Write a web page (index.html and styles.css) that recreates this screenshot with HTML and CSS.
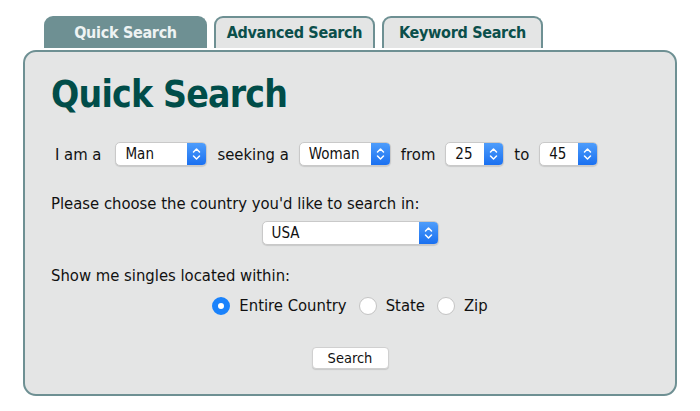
FILE: index.html
```html
<!DOCTYPE html>
<html lang="en">

<head>
    <meta charset="UTF-8">
    <title>Quick Search</title>
    <link rel="stylesheet" href="styles.css">
</head>

<body>
    <div class="search-box">
        <div class="tabs">
            <div class="tab active">Quick Search</div>
            <div class="tab">Advanced Search</div>
            <div class="tab">Keyword Search</div>
        </div>

        <div class="panel">
            <h1>Quick Search</h1>

            <div class="row seek-row">
                <span class="lead">I am a</span>
                <span class="select w-man">
                    <select><option>Man</option></select>
                    <span class="arrow"><svg width="9" height="14" viewBox="0 0 9 14"><path d="M1.5 5 L4.5 2 L7.5 5 M1.5 9 L4.5 12 L7.5 9" fill="none" stroke="#fff" stroke-width="1.5" stroke-linecap="round" stroke-linejoin="round"/></svg></span>
                </span>
                <span>seeking a</span>
                <span class="select w-man">
                    <select><option>Woman</option></select>
                    <span class="arrow"><svg width="9" height="14" viewBox="0 0 9 14"><path d="M1.5 5 L4.5 2 L7.5 5 M1.5 9 L4.5 12 L7.5 9" fill="none" stroke="#fff" stroke-width="1.5" stroke-linecap="round" stroke-linejoin="round"/></svg></span>
                </span>
                <span>from</span>
                <span class="select w-age">
                    <select><option>25</option></select>
                    <span class="arrow"><svg width="9" height="14" viewBox="0 0 9 14"><path d="M1.5 5 L4.5 2 L7.5 5 M1.5 9 L4.5 12 L7.5 9" fill="none" stroke="#fff" stroke-width="1.5" stroke-linecap="round" stroke-linejoin="round"/></svg></span>
                </span>
                <span>to</span>
                <span class="select w-age">
                    <select><option>45</option></select>
                    <span class="arrow"><svg width="9" height="14" viewBox="0 0 9 14"><path d="M1.5 5 L4.5 2 L7.5 5 M1.5 9 L4.5 12 L7.5 9" fill="none" stroke="#fff" stroke-width="1.5" stroke-linecap="round" stroke-linejoin="round"/></svg></span>
                </span>
            </div>

            <p class="label country-label">Please choose the country you'd like to search in:</p>
            <div class="center">
                <span class="select w-country">
                    <select><option>USA</option></select>
                    <span class="arrow"><svg width="9" height="14" viewBox="0 0 9 14"><path d="M1.5 5 L4.5 2 L7.5 5 M1.5 9 L4.5 12 L7.5 9" fill="none" stroke="#fff" stroke-width="1.5" stroke-linecap="round" stroke-linejoin="round"/></svg></span>
                </span>
            </div>

            <p class="label within-label">Show me singles located within:</p>
            <div class="center radios">
                <label><input type="radio" name="area" checked> Entire Country</label>
                <label><input type="radio" name="area"> State</label>
                <label><input type="radio" name="area"> Zip</label>
            </div>

            <div class="center">
                <button>Search</button>
            </div>
        </div>
    </div>
</body>

</html>
```

FILE: styles.css
```css
body {
    margin: 0;
    background-color: #fff;
    font-family: 'DejaVu Sans Condensed', 'DejaVu Sans', sans-serif;
    color: #111;
}

.search-box {
    width: 654px;
    margin: 16px 0 0 23px;
}

.tabs {
    display: flex;
    gap: 7px;
    padding-left: 21px;
}

.tab {
    width: 161px;
    height: 32px;
    box-sizing: border-box;
    border: 2px solid #6e9093;
    border-bottom: none;
    border-radius: 9px 9px 0 0;
    background-color: #e4e5e5;
    color: #0b4f4b;
    font-weight: bold;
    font-size: 16px;
    letter-spacing: -0.3px;
    text-align: center;
    line-height: 30px;
}

.tab.active {
    width: 163px;
    background-color: #6e9093;
    color: #eef3f3;
}

.panel {
    height: 346px;
    box-sizing: border-box;
    border: 2.5px solid #6e9093;
    border-radius: 13px;
    background-color: #e4e5e5;
    margin-top: 2px;
    padding: 19px 0 0 26px;
}

h1 {
    margin: 0;
    font-size: 37px;
    letter-spacing: -0.8px;
    line-height: 48px;
    color: #004d49;
}

.row {
    display: flex;
    align-items: center;
    gap: 10px;
    font-size: 16.5px;
}

.seek-row {
    margin-top: 23px;
    padding-left: 4px;
}

.seek-row .lead {
    margin-right: 4px;
}

.label {
    margin: 0;
    font-size: 16.5px;
}

.country-label {
    margin-top: 28px;
}

.within-label {
    margin-top: 21px;
}

.center {
    display: flex;
    justify-content: center;
    padding-right: 26px;
}

.select {
    display: inline-flex;
    height: 24px;
    box-sizing: border-box;
    border: 1px solid #c9c9c9;
    border-radius: 5px;
    background-color: #fff;
    box-shadow: 0 1px 1px rgba(0, 0, 0, 0.12);
    overflow: hidden;
}

.select select {
    flex: 1;
    appearance: none;
    border: none;
    background: transparent;
    font-family: 'DejaVu Sans Condensed', 'DejaVu Sans', sans-serif;
    font-size: 15px;
    color: #111;
    padding: 0 0 0 9px;
    outline: none;
}

.select .arrow {
    width: 19px;
    display: flex;
    align-items: center;
    justify-content: center;
    background: linear-gradient(#4e9dfb, #1a70f0);
}

.w-man {
    width: 92px;
}

.w-age {
    width: 59px;
}

.w-country {
    width: 177px;
    margin-top: 8px;
}

.radios {
    margin-top: 11px;
    gap: 12px;
    font-size: 16.5px;
}

.radios label {
    display: flex;
    align-items: center;
    gap: 9px;
}

.radios input {
    appearance: none;
    margin: 0;
    width: 18px;
    height: 18px;
    border-radius: 50%;
    border: 1px solid #c4c4c4;
    background-color: #fff;
}

.radios input:checked {
    border: 6px solid #1a82fb;
    background-color: #fff;
}

button {
    margin-top: 32px;
    width: 77px;
    height: 22px;
    border: 1px solid #d0d0d0;
    border-radius: 4px;
    background-color: #fff;
    box-shadow: 0 1px 1px rgba(0, 0, 0, 0.12);
    font-family: 'DejaVu Sans Condensed', 'DejaVu Sans', sans-serif;
    font-size: 14.5px;
    color: #111;
    padding: 0;
}
```
